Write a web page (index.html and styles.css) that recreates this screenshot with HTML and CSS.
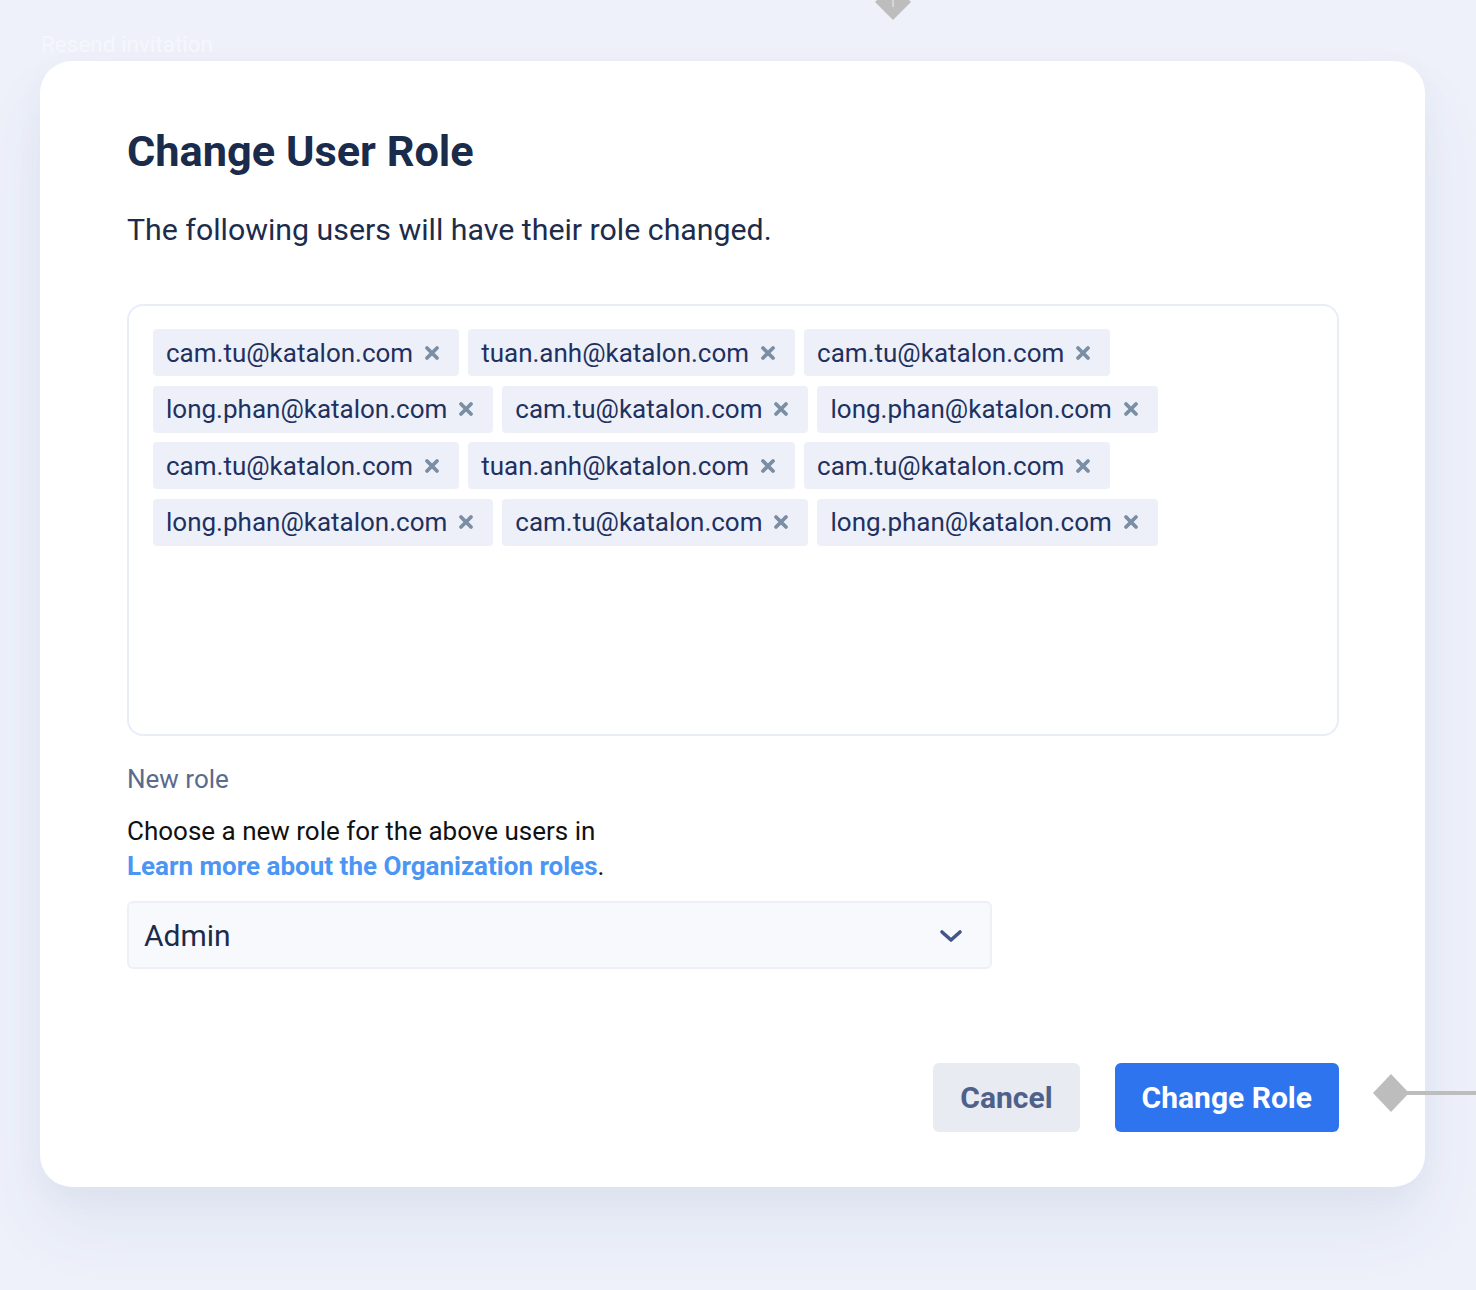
FILE: index.html
```html
<!DOCTYPE html>
<html>
<head>
<meta charset="utf-8">
<link rel="stylesheet" href="styles.css">
</head>
<body>
<div class="page">
  <svg class="conn-top" width="40" height="20" viewBox="0 0 40 20">
    <path d="M20 -16 L38 2 L20 20 L2 2 Z" fill="#bdbdbd"/>
    <rect x="19" y="0" width="2" height="7" fill="#d6d6d6"/>
  </svg>
  <div class="resend">Resend invitation</div>
  <div class="modal">
    <h1 class="title">Change User Role</h1>
    <p class="subtitle">The following users will have their role changed.</p>
    <div class="tagbox">
      <div class="tags">
        <span class="tag"><span class="tag-text">cam.tu@katalon.com</span><svg class="x" viewBox="0 0 16 16"><path d="M3 3 L13 13 M13 3 L3 13"/></svg></span>
        <span class="tag"><span class="tag-text">tuan.anh@katalon.com</span><svg class="x" viewBox="0 0 16 16"><path d="M3 3 L13 13 M13 3 L3 13"/></svg></span>
        <span class="tag"><span class="tag-text">cam.tu@katalon.com</span><svg class="x" viewBox="0 0 16 16"><path d="M3 3 L13 13 M13 3 L3 13"/></svg></span>
        <span class="tag"><span class="tag-text">long.phan@katalon.com</span><svg class="x" viewBox="0 0 16 16"><path d="M3 3 L13 13 M13 3 L3 13"/></svg></span>
        <span class="tag"><span class="tag-text">cam.tu@katalon.com</span><svg class="x" viewBox="0 0 16 16"><path d="M3 3 L13 13 M13 3 L3 13"/></svg></span>
        <span class="tag"><span class="tag-text">long.phan@katalon.com</span><svg class="x" viewBox="0 0 16 16"><path d="M3 3 L13 13 M13 3 L3 13"/></svg></span>
        <span class="tag"><span class="tag-text">cam.tu@katalon.com</span><svg class="x" viewBox="0 0 16 16"><path d="M3 3 L13 13 M13 3 L3 13"/></svg></span>
        <span class="tag"><span class="tag-text">tuan.anh@katalon.com</span><svg class="x" viewBox="0 0 16 16"><path d="M3 3 L13 13 M13 3 L3 13"/></svg></span>
        <span class="tag"><span class="tag-text">cam.tu@katalon.com</span><svg class="x" viewBox="0 0 16 16"><path d="M3 3 L13 13 M13 3 L3 13"/></svg></span>
        <span class="tag"><span class="tag-text">long.phan@katalon.com</span><svg class="x" viewBox="0 0 16 16"><path d="M3 3 L13 13 M13 3 L3 13"/></svg></span>
        <span class="tag"><span class="tag-text">cam.tu@katalon.com</span><svg class="x" viewBox="0 0 16 16"><path d="M3 3 L13 13 M13 3 L3 13"/></svg></span>
        <span class="tag"><span class="tag-text">long.phan@katalon.com</span><svg class="x" viewBox="0 0 16 16"><path d="M3 3 L13 13 M13 3 L3 13"/></svg></span>
      </div>
    </div>
    <div class="label">New role</div>
    <p class="desc">Choose a new role for the above users in<br><a class="link" href="#">Learn more about the Organization roles</a>.</p>
    <div class="select">
      <span class="select-value">Admin</span>
      <svg class="chev" width="24" height="14" viewBox="0 0 24 14"><path d="M3 3 L12 11 L21 3"/></svg>
    </div>
    <div class="actions">
      <button class="btn btn-cancel">Cancel</button>
      <button class="btn btn-primary">Change Role</button>
    </div>
  </div>
  <svg class="conn-right" width="104" height="40" viewBox="0 0 104 40">
    <rect x="18" y="18" width="86" height="4" fill="#bdbdbd"/>
    <path d="M18 1 L36 20 L18 39 L0 20 Z" fill="#bdbdbd"/>
  </svg>
</div>
</body>
</html>
```

FILE: styles.css
```css
* { box-sizing: border-box; }
html, body { margin: 0; padding: 0; }
body {
  background: #eef1fa;
  font-family: Roboto, "Liberation Sans", Arial, sans-serif;
  width: 1476px;
  height: 1290px;
  overflow: hidden;
}
.page {
  position: relative;
  padding: 31px 0 0 40px;
  height: 1290px;
}
.conn-top {
  position: absolute;
  left: 873px;
  top: 0;
}
.conn-right {
  position: absolute;
  left: 1373px;
  top: 1073px;
}
.resend {
  font-size: 22.5px;
  line-height: 26px;
  color: #f5f7fc;
  padding-left: 1px;
}
.modal {
  margin-top: 4px;
  width: 1385px;
  height: 1126px;
  background: #fff;
  border-radius: 32px;
  padding: 65px 86px 0 87px;
  box-shadow: 0 40px 70px rgba(60, 80, 140, 0.07), 0 10px 30px rgba(60, 80, 140, 0.04);
}
.title {
  margin: 0;
  font-size: 43.3px;
  line-height: 52px;
  font-weight: 700;
  color: #1b2b4b;
}
.subtitle {
  margin: 34px 0 0;
  font-size: 30.3px;
  line-height: 36px;
  color: #1c2c4a;
}
.tagbox {
  margin-top: 56px;
  height: 432px;
  border: 2px solid #e9edf8;
  border-radius: 16px;
  padding: 23px 24px;
}
.tags {
  display: flex;
  flex-wrap: wrap;
  gap: 9.5px 9px;
}
.tag {
  display: inline-flex;
  align-items: center;
  height: 47px;
  padding: 0 19px 0 13px;
  background: #edf0f9;
  border-radius: 4px;
  font-size: 26px;
  color: #1f3160;
}
.tag-text { margin-right: 11px; }
.x {
  width: 16px;
  height: 16px;
  stroke: #7a8ea4;
  stroke-width: 3.8;
  stroke-linecap: round;
  fill: none;
}
.label {
  margin-top: 27px;
  font-size: 26px;
  line-height: 32px;
  color: #5a6b8e;
}
.desc {
  margin: 19px 0 0;
  font-size: 26px;
  line-height: 34.5px;
  color: #111;
}
.link {
  color: #4b95f5;
  font-weight: 700;
  text-decoration: none;
}
.select {
  margin-top: 18px;
  width: 865px;
  height: 68px;
  background: #f8f9fd;
  border: 2px solid #edf0f6;
  border-radius: 6px;
  display: flex;
  align-items: center;
  justify-content: space-between;
  padding: 0 27px 0 15px;
}
.select-value {
  font-size: 30px;
  color: #1b2b4b;
}
.chev {
  fill: none;
  stroke: #44558a;
  stroke-width: 3.6;
  stroke-linecap: round;
  stroke-linejoin: round;
  margin-top: 2px;
}
.actions {
  margin-top: 94px;
  display: flex;
  justify-content: flex-end;
  gap: 35px;
}
.btn {
  height: 69px;
  border: none;
  border-radius: 6px;
  font-family: Roboto, "Liberation Sans", Arial, sans-serif;
  font-size: 30px;
  font-weight: 700;
  padding: 0 27px;
}
.btn-cancel {
  background: #e8ebf2;
  color: #4f6089;
}
.btn-primary {
  background: #2e74ee;
  color: #fff;
}
```
